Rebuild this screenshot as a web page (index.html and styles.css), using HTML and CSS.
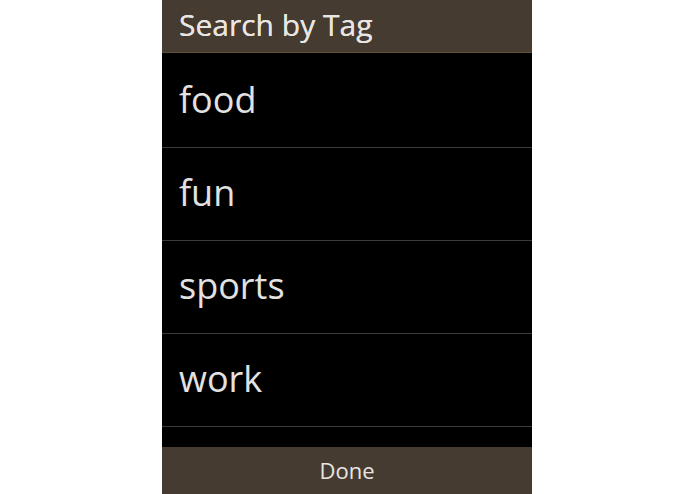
FILE: index.html
```html
<!DOCTYPE html>
<html lang="en">
<head>
    <meta charset="UTF-8">
    <meta name="viewport" content="width=device-width, initial-scale=1.0">
    <title>Search by Tag</title>
    <link rel="stylesheet" href="styles.css">
</head>
<body>
    <div class="dialog">
        <div class="title">Search by Tag</div>
        <ul class="tags">
            <li>food</li>
            <li>fun</li>
            <li>sports</li>
            <li>work</li>
        </ul>
        <div class="footer">Done</div>
    </div>
</body>
</html>
```

FILE: styles.css
```css
* {
    margin: 0;
    padding: 0;
    box-sizing: border-box;
}
body {
    font-family: 'Open Sans', 'DejaVu Sans', sans-serif;
    background: #ffffff;
    height: 100vh;
}
.dialog {
    width: 370px;
    height: 494px;
    margin-left: 162px;
    background: #000000;
    display: flex;
    flex-direction: column;
}
.title {
    height: 53px;
    background: #463b31;
    border-bottom: 1px solid #5e5239;
    color: #e8e6e3;
    font-size: 30px;
    padding: 4px 0 0 17px;
    text-shadow: 0 0 0.4px #e8e6e3;
}
.tags {
    list-style: none;
    flex: 1;
    padding-top: 2px;
}
.tags li {
    height: 93px;
    border-bottom: 1px solid #3b3b3b;
    color: #e2e2e2;
    font-size: 36px;
    padding: 20px 0 0 17px;
}
.footer {
    height: 47px;
    background: #463b31;
    color: #e8e6e3;
    font-size: 22px;
    text-align: center;
    padding-top: 8px;
}
```
